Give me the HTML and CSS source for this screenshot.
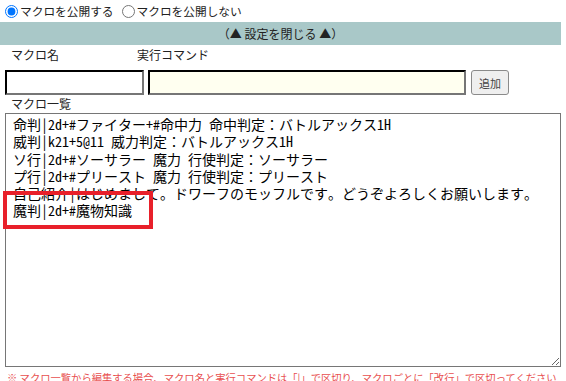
FILE: index.html
```html
<!DOCTYPE html>
<html lang="ja">
<head>
<meta charset="utf-8">
<link rel="stylesheet" href="styles.css">
</head>
<body>
<div class="radios">
  <label class="radio"><input type="radio" name="pub" checked>マクロを公開する</label>
  <label class="radio"><input type="radio" name="pub">マクロを公開しない</label>
</div>
<div class="bar">（▲ 設定を閉じる ▲）</div>
<div class="labels">
  <span class="lbl-name">マクロ名</span>
  <span class="lbl-cmd">実行コマンド</span>
</div>
<div class="inputs">
  <input class="in-name" type="text">
  <input class="in-cmd" type="text">
  <button class="add">追加</button>
</div>
<div class="lbl-list">マクロ一覧</div>
<div class="listwrap">
<textarea class="list">命判|2d+#ファイター+#命中力 命中判定：バトルアックス1H
威判|k21+5@11 威力判定：バトルアックス1H
ソ行|2d+#ソーサラー 魔力 行使判定：ソーサラー
プ行|2d+#プリースト 魔力 行使判定：プリースト
自己紹介|はじめまして。ドワーフのモッフルです。どうぞよろしくお願いします。
魔判|2d+#魔物知識</textarea>
<div class="highlight"></div>
</div>
<p class="note">※ マクロ一覧から編集する場合、マクロ名と実行コマンドは「|」で区切り、マクロごとに「改行」で区切ってください</p>
</body>
</html>
```
FILE: styles.css
```css
html, body {
  margin: 0;
  padding: 0;
  background: #fff;
}
body {
  font-family: "Noto Sans CJK JP", "Noto Sans", sans-serif;
  font-size: 12px;
  color: #222;
  width: 566px;
  overflow: hidden;
}
.radios {
  display: flex;
  height: 22px;
  align-items: center;
  gap: 3px;
}
.radio {
  display: flex;
  align-items: center;
  font-size: 11.7px;
  line-height: 16px;
}
.radio input {
  margin: 0 2px 0 5px;
  width: 13px;
  height: 13px;
}
.bar {
  width: 561px;
  height: 23px;
  background: #a9c8c8;
  text-align: center;
  font-size: 12px;
  line-height: 23px;
  color: #222;
}
.labels {
  display: flex;
  height: 18px;
  padding-top: 2px;
  line-height: 16px;
  font-size: 12px;
}
.lbl-name {
  margin-left: 11px;
  width: 126px;
}
.inputs {
  display: flex;
  align-items: center;
  padding-left: 5px;
  margin-top: 5px;
  gap: 4px;
  height: 25px;
}
.in-name, .in-cmd {
  box-sizing: border-box;
  height: 25px;
  border: 2px inset #767676;
  border-top-color: #222;
  border-left-color: #222;
  margin: 0;
  padding: 0 3px;
  font-size: 13px;
}
.in-name {
  width: 139px;
  background: #fff;
}
.in-cmd {
  width: 318px;
  background: #fffff0;
}
.add {
  margin-left: 1px;
  box-sizing: border-box;
  height: 25px;
  width: 38px;
  padding: 0;
  font-family: "Noto Sans CJK JP", sans-serif;
  font-size: 11px;
  color: #444;
  background: #efefef;
  border: 1px solid #8a8a8a;
  border-radius: 3px;
}
.lbl-list {
  margin-left: 11px;
  height: 18px;
  line-height: 17px;
  font-size: 12px;
}
.listwrap {
  position: relative;
  padding-left: 5px;
}
.list {
  display: block;
  box-sizing: border-box;
  width: 556px;
  height: 254px;
  margin: 0;
  padding: 2px 7px;
  border: 1px solid #767676;
  font-family: "Noto Sans Mono CJK JP", "Liberation Mono", "Noto Sans CJK JP", monospace;
  font-size: 14px;
  line-height: 17.3px;
  color: #000;
  resize: both;
  white-space: pre;
  overflow: hidden;
}
.highlight {
  position: absolute;
  left: 3px;
  top: 78px;
  width: 142px;
  height: 30px;
  border: 4px solid #e8202a;
  pointer-events: none;
}
.note {
  margin: 4px 0 0 7px;
  font-size: 10.3px;
  line-height: 14px;
  color: #e85050;
  white-space: nowrap;
}
```
